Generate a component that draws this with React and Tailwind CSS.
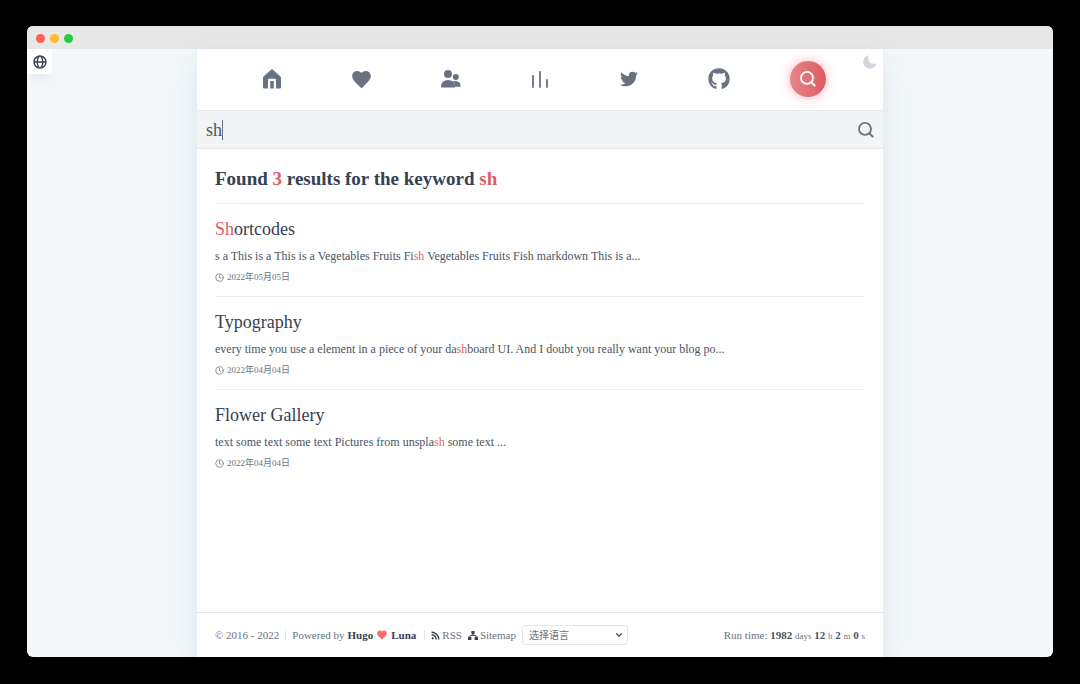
import { BiGlobe } from "react-icons/bi";
import { FaGithub, FaTwitter, FaRss } from "react-icons/fa";
import { IoMdHeart } from "react-icons/io";
import { FiChevronDown, FiClock } from "react-icons/fi";

function HomeIcon() {
  return (
    <svg viewBox="0 0 18 20" width="18" height="20" fill="currentColor" aria-hidden="true">
      <path d="M9 0 .8 7.2Q0 8 0 9V18.4Q0 19.5 1.1 19.5H5V10.7Q5 9.7 6 9.7H12Q13 9.7 13 10.7V19.5H16.9Q18 19.5 18 18.4V9Q18 8 17.2 7.2Z" />
      <path d="M7.2 12H10.8V19.5H7.2Z" />
    </svg>
  );
}

function PeopleIcon() {
  return (
    <svg viewBox="0 0 20 18" width="20" height="18" fill="currentColor" aria-hidden="true">
      <circle cx="7" cy="4" r="4" />
      <circle cx="14.8" cy="7" r="3" />
      <path d="M0 17.6V16Q.6 10 7 10T14 16V17.6Z" />
      <path d="M12 11.2Q18.8 10 19.6 15.6V16.7H13.5Q14 13 12 11.2Z" />
    </svg>
  );
}

function StatsIcon() {
  return (
    <svg viewBox="0 0 16 17" width="16" height="17" stroke="currentColor" strokeWidth="1.8" strokeLinecap="round" aria-hidden="true">
      <path d="M1 5V16M8 1V16M15 9V16" />
    </svg>
  );
}

function SearchIcon() {
  return (
    <svg viewBox="0 0 16 16" width="16" height="16" fill="none" stroke="currentColor" strokeWidth="1.8" aria-hidden="true">
      <circle cx="7" cy="6.9" r="6" />
      <path d="M11.1 11 15.2 15.1" strokeWidth="2" />
    </svg>
  );
}

function MoonIcon() {
  return (
    <svg viewBox="0 0 14 14" width="14" height="14" fill="currentColor" aria-hidden="true">
      <path d="M5.4.3A6.8 6.8 0 1 0 13.6 8.4Q9 9.6 6.8 7.4T5.4.3Z" />
    </svg>
  );
}

function SitemapIcon() {
  return (
    <svg viewBox="0 0 10 9" width="10" height="9" fill="currentColor" aria-hidden="true">
      <rect x="3.4" y="0" width="3.2" height="3.2" rx=".6" />
      <rect x="0" y="5.8" width="3.4" height="3.2" rx=".6" />
      <rect x="6.6" y="5.8" width="3.4" height="3.2" rx=".6" />
      <path d="M5 3V4.4M1.7 6V5.4Q1.7 4.4 3 4.4H7Q8.3 4.4 8.3 5.4V6" fill="none" stroke="currentColor" strokeWidth="1" />
    </svg>
  );
}

const links = [
  { label: "Home", icon: <HomeIcon /> },
  { label: "Favorites", icon: <IoMdHeart size={23} /> },
  { label: "Friends", icon: <PeopleIcon /> },
  { label: "Stats", icon: <StatsIcon /> },
  { label: "Twitter", icon: <FaTwitter size={18} /> },
  { label: "GitHub", icon: <FaGithub size={22} /> },
];

const results = [
  {
    title: ["", "Sh", "ortcodes"],
    text: ["s a This is a This is a Vegetables Fruits Fi", "sh", " Vegetables Fruits Fish markdown This is a..."],
    date: "2022年05月05日",
  },
  {
    title: ["Typography", "", ""],
    text: ["every time you use a element in a piece of your da", "sh", "board UI. And I doubt you really want your blog po..."],
    date: "2022年04月04日",
  },
  {
    title: ["Flower Gallery", "", ""],
    text: ["text some text some text Pictures from unspla", "sh", " some text ..."],
    date: "2022年04月04日",
  },
];

function Marked({ parts }) {
  return (
    <>
      {parts[0]}
      {parts[1] && <mark className="bg-transparent text-[#e05f65]">{parts[1]}</mark>}
      {parts[2]}
    </>
  );
}

function Divider() {
  return <span className="h-2.5 w-px bg-gray-200" />;
}

export default function App() {
  return (
    <div className="flex min-h-screen flex-col bg-black px-[27px] pt-[26px] pb-[27px] font-['Liberation_Serif','Noto_Sans_CJK_SC',serif] text-gray-700">
      <div className="flex flex-1 flex-col overflow-hidden rounded-md bg-[#f4f8fb]">
        <div className="flex h-[23px] shrink-0 items-center gap-[5px] bg-[#e8e8e8] px-[9px] pt-[2px]">
          <span className="size-[9px] rounded-full bg-[#ff5f57]" />
          <span className="size-[9px] rounded-full bg-[#febc2e]" />
          <span className="size-[9px] rounded-full bg-[#28c840]" />
        </div>

        <div className="relative flex flex-1 flex-col">
          <button aria-label="Language" className="absolute top-0 left-0 flex size-[25px] items-center justify-center rounded-br-sm bg-white text-gray-700 shadow-lg shadow-slate-400/10">
            <BiGlobe size={16} />
          </button>

          <div className="mx-auto flex w-full max-w-[686px] flex-1 flex-col bg-white shadow-[0_10px_30px_rgba(71,115,125,0.14)]">
            <header className="relative">
              <nav className="flex h-[61px] items-center px-[30px] pb-px text-gray-500">
                {links.map((link) => (
                  <a key={link.label} href="#" aria-label={link.label} className="flex flex-1 justify-center">
                    {link.icon}
                  </a>
                ))}
                <a href="#" aria-label="Search" className="flex flex-1 justify-center">
                  <span className="flex size-9 items-center justify-center rounded-full bg-linear-to-r from-[#e4868b] to-[#e05a61] text-white shadow-[0_0_12px_rgba(239,68,88,0.4)]">
                    <SearchIcon />
                  </span>
                </a>
              </nav>
              <button aria-label="Dark mode" className="absolute top-1.5 right-1.5 text-gray-300">
                <MoonIcon />
              </button>
            </header>

            <form className="flex h-[39px] items-center justify-between border-y border-gray-200 bg-gray-100 px-[9px]" onSubmit={(e) => e.preventDefault()}>
              <div className="flex flex-1 items-center">
                <input type="text" aria-label="Keyword" defaultValue="sh" className="field-sizing-content bg-transparent text-[18px] leading-6 text-gray-600 caret-transparent outline-none" />
                <span className="h-5 w-px bg-gray-500" />
              </div>
              <button aria-label="Search" className="text-gray-500">
                <SearchIcon />
              </button>
            </form>

            <main className="flex-1 px-[18px]">
              <h1 className="border-b border-gray-200/80 pt-[18px] pb-3 text-[19px] leading-6 font-bold">
                Found <span className="text-[#e05f65]">3</span> results for the keyword <span className="text-[#e05f65]">sh</span>
              </h1>
              <ul className="divide-y divide-gray-200/80">
                {results.map((item) => (
                  <li key={item.title.join("")} className="py-3">
                    <h2 className="text-[18px] leading-[26px]">
                      <a href="#"><Marked parts={item.title} /></a>
                    </h2>
                    <p className="mt-1 text-[12px] leading-5 text-gray-600"><Marked parts={item.text} /></p>
                    <p className="mt-1 flex h-[14px] items-center gap-[3px] text-[9px] leading-[14px] text-gray-500">
                      <FiClock size={9} />
                      <time>{item.date}</time>
                    </p>
                  </li>
                ))}
              </ul>
            </main>

            <footer className="flex h-[45px] items-center justify-between border-t border-gray-200 px-[18px] text-[11px] leading-4 text-gray-500">
              <div className="flex items-center gap-1.5">
                <span>© 2016 - 2022</span>
                <Divider />
                <span className="flex items-center gap-[3px]">
                  Powered by
                  <a href="#" className="font-bold text-gray-700">Hugo</a>
                  <IoMdHeart size={12} className="text-[#ff6b6b]" />
                  <a href="#" className="font-bold text-gray-700">Luna</a>
                </span>
                <span className="ml-0.5 flex"><Divider /></span>
                <a href="#" className="flex items-center gap-0.5"><FaRss size={9} className="text-gray-700" />RSS</a>
                <a href="#" className="flex items-center gap-0.5"><span className="text-gray-700"><SitemapIcon /></span>Sitemap</a>
                <span className="relative flex items-center">
                  <select aria-label="选择语言" className="h-5 w-[106px] appearance-none rounded-[3px] border border-gray-200 bg-white pl-1.5 font-['Noto_Sans_CJK_SC',sans-serif] text-[10px] leading-4 text-gray-500">
                    <option>选择语言</option>
                  </select>
                  <FiChevronDown size={10} strokeWidth={3} className="pointer-events-none absolute right-1 text-gray-600" />
                </span>
              </div>
              <p>
                Run time: <b className="text-gray-600">1982</b> <small className="text-[9px]">days</small> <b className="text-gray-600">12</b> <small className="text-[9px]">h</small> <b className="text-gray-600">2</b> <small className="text-[9px]">m</small> <b className="text-gray-600">0</b> <small className="text-[9px]">s</small>
              </p>
            </footer>
          </div>
        </div>
      </div>
    </div>
  );
}
